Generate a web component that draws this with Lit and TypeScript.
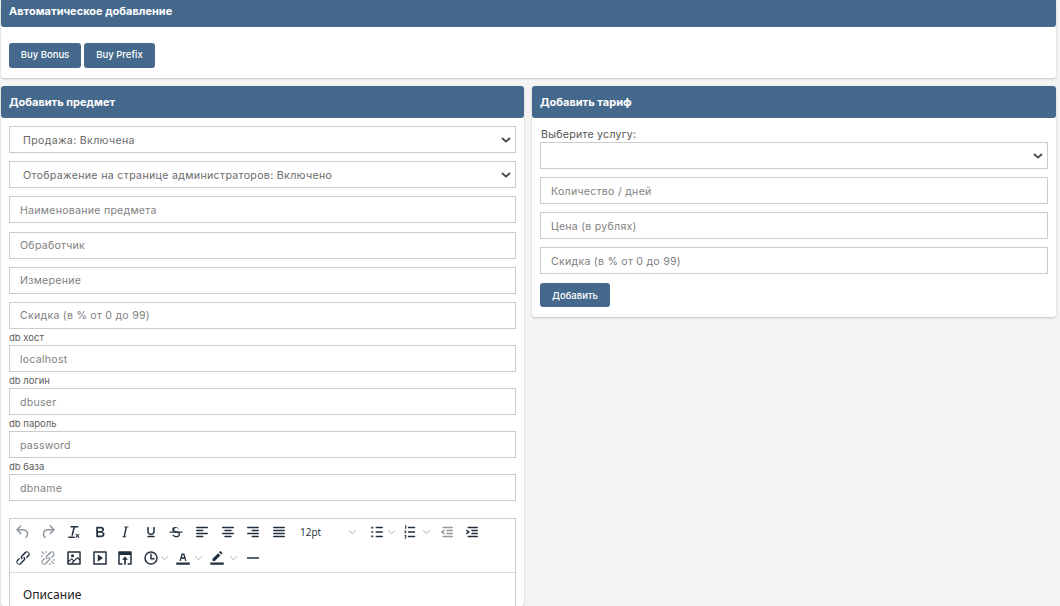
import { LitElement, html, css, svg } from "lit";
import { customElement } from "lit/decorators.js";

const P: Record<string, string> = {
  undo: "M6.4 8H12c3.7 0 6.2 2 6.8 5.1.6 2.7-.4 5.6-2.3 6.8a1 1 0 0 1-1-1.8c1.1-.6 1.8-2.7 1.4-4.6-.5-2.1-2.1-3.5-4.9-3.5H6.4l3.3 3.3a1 1 0 1 1-1.4 1.4l-5-5a1 1 0 0 1 0-1.4l5-5a1 1 0 0 1 1.4 1.4L6.4 8Z",
  redo: "M17.6 10H12c-2.8 0-4.4 1.4-4.9 3.5-.4 2 .3 4 1.4 4.6a1 1 0 1 1-1 1.8c-2-1.2-2.9-4.1-2.3-6.8.6-3 3-5.1 6.8-5.1h5.6l-3.3-3.3a1 1 0 1 1 1.4-1.4l5 5a1 1 0 0 1 0 1.4l-5 5a1 1 0 0 1-1.4-1.4l3.3-3.3Z",
  clear: "M13.2 6a1 1 0 0 1 0 .2l-2.6 10a1 1 0 0 1-1 .8h-.2a.8.8 0 0 1-.8-1l2.6-10H8a1 1 0 1 1 0-2h9a1 1 0 0 1 0 2h-3.8ZM5 18h7a1 1 0 0 1 0 2H5a1 1 0 0 1 0-2Zm13 1.5L16.5 18 15 19.5a.7.7 0 0 1-1-1l1.5-1.5-1.5-1.5a.7.7 0 0 1 1-1l1.5 1.5 1.5-1.5a.7.7 0 0 1 1 1L17.5 17l1.5 1.5a.7.7 0 0 1-1 1Z",
  bold: "M7.8 19c-.3 0-.5 0-.6-.2l-.2-.5V5.7c0-.2 0-.4.2-.5l.6-.2h5c1.5 0 2.7.3 3.5 1 .7.6 1.1 1.4 1.1 2.5a3 3 0 0 1-.6 1.9c-.4.6-1 1-1.6 1.2.4.1.9.3 1.3.6s.8.7 1 1.2c.4.4.5 1 .5 1.6 0 1.3-.4 2.3-1.3 3-.8.7-2.1 1-3.8 1H7.8Zm5-8.3c.6 0 1.2-.1 1.6-.5.4-.3.6-.7.6-1.3 0-1.1-.8-1.7-2.3-1.7H9.3v3.5h3.4Zm.5 6c.7 0 1.3-.1 1.7-.4.4-.4.6-.9.6-1.5s-.2-1-.7-1.4c-.4-.3-1-.4-2-.4H9.4v3.8h4Z",
  italic: "m16.7 4.7-.1.9h-.3c-.6 0-1 0-1.4.3-.3.3-.4.6-.5 1.1l-2.1 9.8v.6c0 .5.4.8 1.4.8h.2l-.2.8H8l.2-.8h.2c1.1 0 1.8-.5 2-1.5l2-9.8.1-.5c0-.6-.4-.8-1.4-.8h-.3l.2-.9h5.8Z",
  underline: "M16 5c.6 0 1 .4 1 1v5.500a4 4 0 0 1-.4 1.800l-1 1.400a5.300 5.300 0 0 1-5.500 1 5 5 0 0 1-1.600-1c-.5-.4-.8-.9-1.100-1.400a4 4 0 0 1-.4-1.800V6c0-.6.4-1 1-1s1 .4 1 1v5.500c0 .3 0 .6.2 1l.6.700a3.300 3.300 0 0 0 2.200.8 3.400 3.400 0 0 0 2.200-.8c.3-.2.4-.5.6-.8l.2-.9V6c0-.6.4-1 1-1ZM8 17h8c.6 0 1 .4 1 1s-.4 1-1 1H8a1 1 0 0 1 0-2Z",
  strike: "M15.6 8.500c-.5-.7-1-1.100-1.300-1.300-.6-.4-1.300-.6-2-.6-2.700 0-2.800 1.700-2.800 2.100 0 1.600 1.800 2 3.200 2.300 4.400.9 4.600 2.800 4.600 3.900 0 1.400-.7 4.100-5 4.100A6.200 6.200 0 0 1 7 16.400l1.500-1.100c.4.6 1.600 2 3.700 2 1.600 0 2.500-.4 3-1 .3-.4.4-.9.4-1.300 0-.8-.4-1.300-1.500-1.800-.8-.4-1.900-.6-2.600-.8-1.100-.2-2-.5-2.700-.8-.5-.3-1-.6-1.300-1-.4-.5-.6-1.200-.6-1.900 0-1.700 1-3.400 3.900-3.400 1 0 2 .3 3 .8.5.3 1 .7 1.500 1.400l-1.200.9Z|M4 11.300h16a.8.8 0 0 1 0 1.600H4a.8.8 0 0 1 0-1.600Z",
  left: "M5 5h14c.6 0 1 .4 1 1s-.4 1-1 1H5a1 1 0 1 1 0-2Zm0 4h8c.6 0 1 .4 1 1s-.4 1-1 1H5a1 1 0 1 1 0-2Zm0 8h8c.6 0 1 .4 1 1s-.4 1-1 1H5a1 1 0 0 1 0-2Zm0-4h14c.6 0 1 .4 1 1s-.4 1-1 1H5a1 1 0 0 1 0-2Z",
  center: "M5 5h14c.6 0 1 .4 1 1s-.4 1-1 1H5a1 1 0 1 1 0-2Zm3 4h8c.6 0 1 .4 1 1s-.4 1-1 1H8a1 1 0 1 1 0-2Zm0 8h8c.6 0 1 .4 1 1s-.4 1-1 1H8a1 1 0 0 1 0-2Zm-3-4h14c.6 0 1 .4 1 1s-.4 1-1 1H5a1 1 0 0 1 0-2Z",
  right: "M5 5h14c.6 0 1 .4 1 1s-.4 1-1 1H5a1 1 0 1 1 0-2Zm6 4h8c.6 0 1 .4 1 1s-.4 1-1 1h-8a1 1 0 0 1 0-2Zm0 8h8c.6 0 1 .4 1 1s-.4 1-1 1h-8a1 1 0 0 1 0-2Zm-6-4h14c.6 0 1 .4 1 1s-.4 1-1 1H5a1 1 0 0 1 0-2Z",
  justify: "M5 5h14c.6 0 1 .4 1 1s-.4 1-1 1H5a1 1 0 1 1 0-2Zm0 4h14c.6 0 1 .4 1 1s-.4 1-1 1H5a1 1 0 1 1 0-2Zm0 4h14c.6 0 1 .4 1 1s-.4 1-1 1H5a1 1 0 0 1 0-2Zm0 4h14c.6 0 1 .4 1 1s-.4 1-1 1H5a1 1 0 0 1 0-2Z",
  bullist: "M11 5h8c.6 0 1 .4 1 1s-.4 1-1 1h-8a1 1 0 0 1 0-2Zm0 6h8c.6 0 1 .4 1 1s-.4 1-1 1h-8a1 1 0 0 1 0-2Zm0 6h8c.6 0 1 .4 1 1s-.4 1-1 1h-8a1 1 0 0 1 0-2ZM4.500 5h2.500v2.200H4.500ZM4.500 10.900h2.500v2.200H4.500ZM4.500 16.800h2.500v2.200H4.500Z",
  numlist: "M10 17h8c.6 0 1 .4 1 1s-.4 1-1 1h-8a1 1 0 0 1 0-2Zm0-6h8c.6 0 1 .4 1 1s-.4 1-1 1h-8a1 1 0 0 1 0-2Zm0-6h8c.6 0 1 .4 1 1s-.4 1-1 1h-8a1 1 0 1 1 0-2ZM5.500 3H7v4.500H5.500ZM4.500 10H7v1.200L5.800 12.800H7v1H4.500v-1.100L5.800 11H4.500ZM4.500 16H7v4.500H4.500v-1h1.300v-.7H5v-.8h.8V17H4.500Z",
  outdent: "M7 5h12c.6 0 1 .4 1 1s-.4 1-1 1H7a1 1 0 1 1 0-2Zm5 4h7c.6 0 1 .4 1 1s-.4 1-1 1h-7a1 1 0 0 1 0-2Zm0 4h7c.6 0 1 .4 1 1s-.4 1-1 1h-7a1 1 0 0 1 0-2Zm-5 4h12a1 1 0 0 1 0 2H7a1 1 0 0 1 0-2Zm1.600-3.800a1 1 0 0 1-1.200 1.600l-3-2a1 1 0 0 1 0-1.600l3-2a1 1 0 0 1 1.200 1.600L6.800 12l1.800 1.200Z",
  indent: "M7 5h12c.6 0 1 .4 1 1s-.4 1-1 1H7a1 1 0 1 1 0-2Zm5 4h7c.6 0 1 .4 1 1s-.4 1-1 1h-7a1 1 0 0 1 0-2Zm0 4h7c.6 0 1 .4 1 1s-.4 1-1 1h-7a1 1 0 0 1 0-2Zm-5 4h12a1 1 0 0 1 0 2H7a1 1 0 0 1 0-2Zm-2.600-3.800L6.200 12l-1.800-1.200a1 1 0 0 1 1.200-1.600l3 2a1 1 0 0 1 0 1.600l-3 2a1 1 0 1 1-1.200-1.600Z",
  link: "M6.200 12.300a1 1 0 0 1 1.400 1.400l-2 2a2 2 0 1 0 2.600 2.800l4.800-4.800a1 1 0 0 0 0-1.400 1 1 0 1 1 1.400-1.300 2.900 2.900 0 0 1 0 4L9.600 20a3.900 3.900 0 0 1-5.500-5.500l2-2Zm11.600-.6a1 1 0 0 1-1.400-1.400l2-2a2 2 0 1 0-2.600-2.800L11 10.300a1 1 0 0 0 0 1.400A1 1 0 1 1 9.600 13a2.900 2.900 0 0 1 0-4L14.400 4a3.900 3.900 0 0 1 5.500 5.500l-2 2Z",
  unlink: "M6.200 12.300a1 1 0 0 1 1.400 1.400l-2.100 2a2 2 0 1 0 2.700 2.800l4.800-4.800a1 1 0 0 0 0-1.400 1 1 0 1 1 1.400-1.300 2.900 2.900 0 0 1 0 4L9.600 20a3.900 3.900 0 0 1-5.500-5.500l2-2Zm11.600-.6a1 1 0 0 1-1.400-1.400l2.100-2a2 2 0 1 0-2.700-2.800L11 10.300a1 1 0 0 0 0 1.400A1 1 0 1 1 9.600 13a2.900 2.900 0 0 1 0-4L14.400 4a3.900 3.900 0 0 1 5.500 5.500l-2 2ZM7.600 6.300a.8.8 0 0 1-1 1.100L3.300 4.200a.7.7 0 1 1 1-1l3.200 3.100ZM5.100 8.600a.8.8 0 0 1 0 1.500H3a.8.8 0 0 1 0-1.500H5Zm5-3.500a.8.8 0 0 1-1.500 0V3a.8.8 0 0 1 1.500 0V5Zm6 11.800a.8.8 0 0 1 1-1l3.200 3.200a.8.8 0 0 1-1 1L16 17Zm-2.200 2a.8.8 0 0 1 1.500 0V21a.8.8 0 0 1-1.500 0V19Zm5-3.500a.7.7 0 1 1 0-1.500H21a.8.8 0 0 1 0 1.500H19Z",
  image: "m5 15.700 3.300-3.200c.3-.3.7-.3 1 0L12 15l4.100-4c.3-.4.8-.4 1 0l2 1.900V5H5v10.700ZM5 18V19h3l2.800-2.900-2-2L5 17.900Zm14-3-2.500-2.400-6.400 6.500H19v-4ZM4 3h16c.6 0 1 .4 1 1v16c0 .6-.4 1-1 1H4a1 1 0 0 1-1-1V4c0-.6.4-1 1-1Zm6 8a2 2 0 1 0 0-4 2 2 0 0 0 0 4Z",
  media: "M4 3h16c.6 0 1 .4 1 1v16c0 .6-.4 1-1 1H4a1 1 0 0 1-1-1V4c0-.6.4-1 1-1Zm1 2v14h14V5H5Zm4.800 2.600 5.600 4a.5.5 0 0 1 0 .8l-5.600 4A.5.5 0 0 1 9 16V8a.5.5 0 0 1 .8-.4Z",
  upload: "M4 3h16a1 1 0 0 1 1 1v16a1 1 0 0 1-1 1h-4.500v-2H19V8H5v11h3.500v2H4a1 1 0 0 1-1-1V4a1 1 0 0 1 1-1Zm8 7 4 4.300h-2.900V21h-2.200v-6.700H8L12 10Z",
  time: "M12 19a7 7 0 1 0 0-14 7 7 0 0 0 0 14Zm0 2a9 9 0 1 1 0-18 9 9 0 0 1 0 18ZM16 12h-3V7c0-.6-.4-1-1-1a1 1 0 0 0-1 1v7h5c.6 0 1-.4 1-1s-.4-1-1-1Z",
  color: "M3 18h18v3H3ZM8.700 16h-.8a.5.5 0 0 1-.5-.6l2.700-9c.1-.3.3-.4.5-.4h2.800c.2 0 .4.1.5.4l2.700 9a.5.5 0 0 1-.5.6h-.8a.5.5 0 0 1-.4-.4l-.7-2.200c0-.3-.3-.4-.5-.4h-3.400c-.2 0-.4.1-.5.4l-.7 2.200c0 .3-.2.4-.4.4Zm2.600-7.600-.6 2a.5.5 0 0 0 .5.6h1.600a.5.5 0 0 0 .5-.6l-.6-2c0-.3-.3-.4-.5-.4h-.4c-.2 0-.4.1-.5.400Z",
  hilite: "M3 18h18v3H3ZM6 16v-3l7.500-7.500 3 3L9 16H6ZM14.600 4.400l1.400-1.400c.3-.3.700-.3 1 0l2 2c.3.300.3.700 0 1l-1.400 1.400-3-3Z",
  hr: "M4 11h16v2H4z",
};

const chevSmall = svg`<path d="M1 1.500 5 5.500 9 1.500" fill="none" stroke="currentColor" stroke-width="1"/>`;

@customElement("app-root")
export class AppRoot extends LitElement {
  static styles = css`
    :host { display: block; height: 606px; overflow: hidden; background: #f4f4f4; font-family: Inter, "Liberation Sans", sans-serif; color: #555; }
    * { box-sizing: border-box; }
    .page { display: flex; flex-direction: column; gap: 8px; padding: 0 4px 0 1px; }
    .card { background: #fff; border-radius: 3px; box-shadow: 0 1px 2px rgba(0,0,0,.2); }
    .head { background: #45698c; color: #fff; font-size: 11px; font-weight: 700; height: 32px; padding: 0 8px; display: flex; align-items: center; border-radius: 3px; }
    .head.cut { height: 27px; padding-bottom: 5px; border-radius: 0 0 3px 3px; }
    .topbody { padding: 16px 8px 10px; display: flex; gap: 3px; }
    button.b { height: 25px; padding: 0 0 2px; background: #45698c; color: #fff; border: 0; border-radius: 3px; font: 500 9.5px Inter, "Liberation Sans", sans-serif; }
    .w72 { width: 72px; }
    .w71 { width: 71px; }
    button.add { width: 70px; height: 24px; margin-top: 1px; padding-bottom: 0; }
    .grid { display: grid; grid-template-columns: 523px 524px; gap: 8px; align-items: start; }
    .body { padding: 8px; display: flex; flex-direction: column; }
    .left { height: 520px; }
    .right .body { padding-bottom: 10px; }
    .f { display: block; width: 100%; height: 27px; margin: 0; background: #fff; border: 1px solid #cbcbcb; border-radius: 0; padding: 1px 10px 0; font: 400 10.6px Inter, "Liberation Sans", sans-serif; color: #6a6a6a; letter-spacing: .25px; outline: 0; flex: none; }
    .f::placeholder { color: #818181; opacity: 1; }
    .stack { display: flex; flex-direction: column; gap: 8.2px; }
    .right .stack { gap: 8px; }
    .sw { position: relative; display: block; height: 27px; flex: none; }
    select.f { appearance: none; -webkit-appearance: none; padding: 1px 10px 0 13px; letter-spacing: .33px; }
    .sw svg { position: absolute; right: 5px; top: 11px; width: 10px; height: 6px; color: #444; }
    .dblabel { font-size: 9.5px; height: 13px; line-height: 12px; color: #5c5c5c; margin-top: 3px; display: block; }
    .stack.db { gap: 0; }
    .stack.db .f { padding-top: 2px; }
    .svc { font-size: 10.6px; line-height: 16px; height: 16px; padding: 1px 0 0 1px; color: #555; display: block; letter-spacing: .25px; }
    .editor { margin-top: 17px; height: 120px; border: 1px solid #cbcbcb; flex: none; }
    .tb { height: 54px; border-bottom: 1px solid #dcdcdc; display: flex; flex-direction: column; }
    .row { height: 26px; display: flex; align-items: center; flex: none; }
    .i { width: 25.6px; height: 26px; display: flex; align-items: center; justify-content: center; flex: none; color: #222f3e; }
    .i svg { width: 18px; height: 18px; fill: currentColor; display: block; }
    .i.off { color: rgba(34,47,62,.5); }
    .ch { width: 9px; height: 6px; color: #9aa0a6; flex: none; display: block; }
    .c1 { margin: 0 .7px 0 -2px; }
    .c2 { margin: 0 2.9px 0 -.5px; }
    .c3 { margin: 0 1.2px 0 -3.1px; }
    .c4 { margin: 0 1.2px 0 -1.8px; }
    .c5 { margin: 0 2.2px 0 -.8px; }
    .sizewrap { display: flex; align-items: center; width: 72.2px; flex: none; }
    .size { font-size: 10px; color: #222f3e; width: 46px; padding-left: 8.5px; flex: none; font-family: "Open Sans", "Noto Sans", sans-serif; }
    .spacer { width: 10.5px; flex: none; }
    .content { padding: 14px 13px; font: 400 12.1px/15px "Noto Sans", "Open Sans", sans-serif; color: #222; }
  `;

  private ic(name: string, off = false) {
    return html`<span class="i ${off ? "off" : ""}"><svg viewBox="0 0 24 24">${P[name].split("|").map((d) => svg`<path fill-rule="evenodd" d=${d}></path>`)}</svg></span>`;
  }
  private chev(cls: string) {
    return html`<svg class="ch ${cls}" viewBox="0 0 10 7">${chevSmall}</svg>`;
  }
  private sel(text: string) {
    return html`<label class="sw"><select class="f" aria-label=${text || "Выберите услугу"}><option>${text}</option></select>
      <svg viewBox="0 0 10 6"><path d="M1 1l4 3.600L9 1" fill="none" stroke="currentColor" stroke-width="1.800"/></svg></label>`;
  }
  private inp(ph: string) {
    return html`<input class="f" placeholder=${ph} />`;
  }

  render() {
    return html`
      <div class="page">
        <section class="card">
          <div class="head cut">Автоматическое добавление</div>
          <div class="topbody">
            <button class="b w72">Buy Bonus</button>
            <button class="b w71">Buy Prefix</button>
          </div>
        </section>
        <div class="grid">
          <section class="card left">
            <div class="head">Добавить предмет</div>
            <div class="body">
              <div class="stack">
                ${this.sel("Продажа: Включена")}
                ${this.sel("Отображение на странице администраторов: Включено")}
                ${this.inp("Наименование предмета")}
                ${this.inp("Обработчик")}
                ${this.inp("Измерение")}
                ${this.inp("Скидка (в % от 0 до 99)")}
              </div>
              <div class="stack db">
                ${[["db хост", "localhost"], ["db логин", "dbuser"], ["db пароль", "password"], ["db база", "dbname"]].map(
                  ([l, p]) => html`<span class="dblabel">${l}</span>${this.inp(p)}`
                )}
              </div>
              <div class="editor">
                <div class="tb">
                  <div class="row">
                    ${this.ic("undo", true)}${this.ic("redo", true)}${this.ic("clear")}${this.ic("bold")}${this.ic("italic")}${this.ic("underline")}${this.ic("strike")}${this.ic("left")}${this.ic("center")}${this.ic("right")}${this.ic("justify")}
                    <span class="sizewrap"><span class="size">12pt</span><span class="spacer"></span>${this.chev("")}</span>
                    ${this.ic("bullist")}${this.chev("c1")}${this.ic("numlist")}${this.chev("c2")}${this.ic("outdent", true)}${this.ic("indent")}
                  </div>
                  <div class="row">
                    ${this.ic("link")}${this.ic("unlink", true)}${this.ic("image")}${this.ic("media")}${this.ic("upload")}${this.ic("time")}${this.chev("c3")}${this.ic("color")}${this.chev("c4")}${this.ic("hilite")}${this.chev("c5")}${this.ic("hr")}
                  </div>
                </div>
                <div class="content">Описание</div>
              </div>
            </div>
          </section>
          <section class="card right">
            <div class="head">Добавить тариф</div>
            <div class="body">
              <label class="svc">Выберите услугу:</label>
              <div class="stack">
                ${this.sel("")}
                ${this.inp("Количество / дней")}
                ${this.inp("Цена (в рублях)")}
                ${this.inp("Скидка (в % от 0 до 99)")}
                <button class="b add">Добавить</button>
              </div>
            </div>
          </section>
        </div>
      </div>
    `;
  }
}
